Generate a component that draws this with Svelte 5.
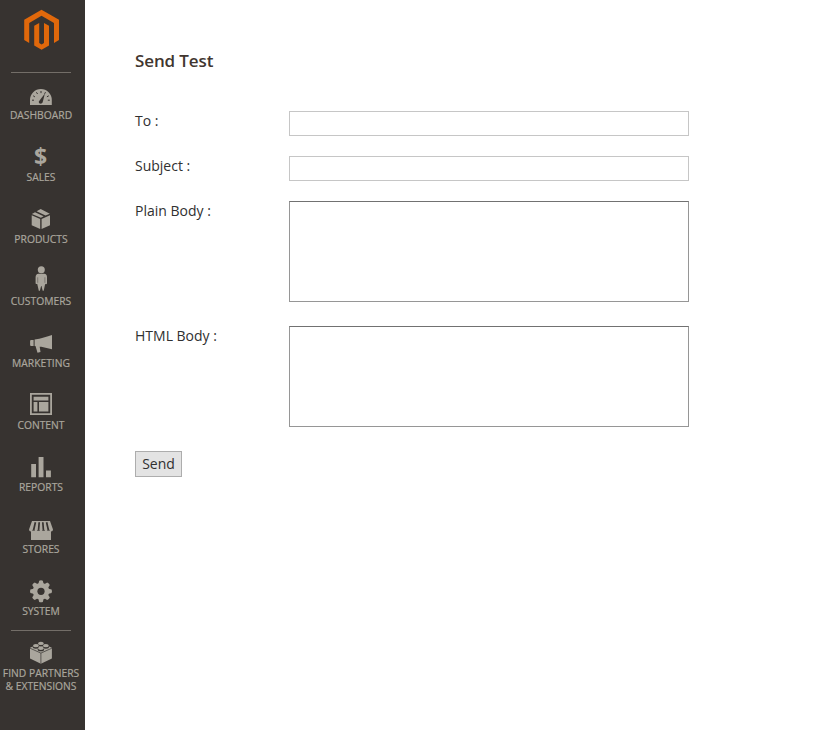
<script>
  const items = [
    { id: 'dashboard', label: 'Dashboard' },
    { id: 'sales', label: 'Sales' },
    { id: 'products', label: 'Products' },
    { id: 'customers', label: 'Customers' },
    { id: 'marketing', label: 'Marketing' },
    { id: 'content', label: 'Content' },
    { id: 'reports', label: 'Reports' },
    { id: 'stores', label: 'Stores' },
    { id: 'system', label: 'System' },
    { id: 'partners', label: 'Find Partners & Extensions' }
  ];
  const teeth = [0, 45, 90, 135, 180, 225, 270, 315];
  const studs = [[13.9, 4.4], [8.9, 6.7], [18.9, 6.7], [13.9, 9.3]];
</script>

<div class="page">
  <aside>
    <div class="logo">
      <svg width="37" height="42" viewBox="0 0 37 42">
        <path d="M18.5 .8 36 10.8V31L31 34V13.9L18.5 6.8 6.2 13.9V34L1.2 31V10.8Z" />
        <path d="M11.2 16.8 16.2 13.9V34L18.6 35.4 21 34V13.9L26 16.8V36.5L18.6 40.8 11.2 36.5Z" />
      </svg>
    </div>
    <nav>
      {#each items as item (item.id)}
        <a class="item" class:ruled={item.id === 'dashboard' || item.id === 'partners'} href="#{item.id}">
          <svg class="icon" width="28" height="28" viewBox="0 0 28 28">
            {#if item.id === 'dashboard'}
              <path d="M3 24V19a10.9 10.9 0 0 1 21.8 0V24Z" />
              <path class="cut" d="M11.8 20.4 17.9 12.6 15.6 21.6C14.5 23.6 11.4 22.6 11.8 20.4Z" />
              <path class="line" stroke-width="1" d="M5 19.2H7M6.2 14.8 7.9 15.9M9.4 11.3 10.6 13M14 10V12.1M18.5 11.2 17.6 12.8M21.8 14.8 19.9 15.8M22.8 19.2H20.8" />
            {:else if item.id === 'sales'}
              <text x="13.6" y="22" text-anchor="middle">$</text>
            {:else if item.id === 'products'}
              <path d="M4.7 10.2 13.2 13.9V24L4.7 20.2ZM14.6 13.9 23 10.2V20.2L14.6 24Z" />
              <path d="M4.9 8.9 8 7.2 16.6 11.3 13.9 12.7ZM9.6 6.3 13.7 4 22.8 8.8 18.5 10.6Z" />
            {:else if item.id === 'customers'}
              <circle cx="14.3" cy="2.7" r="3.5" />
              <path d="M11.5 6.8H17.2Q20 7.1 20 10V16.5Q19.2 18 18.2 16.8L16.7 23.7H15.7L14.5 19.1H14.1L12.9 23.7H11.8L10.2 16.8Q9 17.6 8.6 16.2V10Q8.7 7.1 11.5 6.8Z" />
              <path class="line" stroke-width=".4" d="M10.7 10.3V15.8M17.9 10.3V15.8" />
            {:else if item.id === 'marketing'}
              <path d="M3.6 11H6.6V16.9H3.6L3.1 16V12ZM7.6 10.5C14 10 20 7.4 25 6V20.2L14.2 17.8H12.7L13.5 23L10.5 23.8 8.5 17.1 7.6 17Z" />
            {:else if item.id === 'content'}
              <path fill-rule="evenodd" d="M3 2H25V24H3ZM4.8 3.8V22.2H23.2V3.8Z" />
              <path d="M6.6 5.8H21.4V9.4H6.6ZM6.6 10.9H10.4V20.4H6.6ZM12 10.9H21.4V20.4H12Z" />
            {:else if item.id === 'reports'}
              <path d="M4.2 11.1H9V24.3H4.2ZM11.6 4H16.5V24.3H11.6ZM19 17.5H23.9V24.3H19Z" />
            {:else if item.id === 'stores'}
              <path d="M5 6H23L26 14.4Q26 16.4 24 16.5V25H4V16.5Q2 16.4 2 14.4Z" />
              <path class="line" stroke-width="1.7" d="M8.4 7.2 6.7 14.8M12.2 7.2 11.6 14.8M15.8 7.2 16.4 14.8M19.6 7.2 21.3 14.8" />
              <path class="cut" d="M4.9 15.4 6.6 13.8 8 15.8ZM9.9 15.8 11.6 13.8 13 15.8ZM15 15.8 16.4 13.8 18.1 15.8ZM20 15.8 21.4 13.8 23.1 15.4Z" />
            {:else if item.id === 'system'}
              <circle cx="14" cy="14.3" r="8.3" />
              {#each teeth as angle}
                <path transform="rotate({angle} 14 14.3)" d="M11.2 7.6 12.2 3.7Q14 2.9 15.8 3.7L16.8 7.6Z" />
              {/each}
              <circle class="cut" cx="14" cy="14.3" r="3.6" />
            {:else}
              <path d="M3 8.8 13.9 4 24.9 8.8V19.6L13.9 24.7 3 19.6Z" />
              <path class="line" stroke-width=".7" d="M3 9.2 13.9 14.1 24.9 9.2M13.9 14.1V24.7" />
              {#each studs as [x, y]}
                <path class="cut" d="M{x - 3.2} {y}V{y + 1.1}A3.2 1.9 0 0 0 {x + 3.2} {y + 1.1}V{y}Z" />
                <ellipse cx={x} cy={y} rx="2.9" ry="1.6" />
              {/each}
            {/if}
          </svg>
          <span>{item.label}</span>
        </a>
      {/each}
    </nav>
  </aside>

  <main>
    <h1>Send Test</h1>
    <form>
      <div class="row"><label for="to">To :</label><input id="to" type="text" /></div>
      <div class="row"><label for="subject">Subject :</label><input id="subject" type="text" /></div>
      <div class="row area"><label for="plain">Plain Body :</label><textarea id="plain"></textarea></div>
      <div class="row area"><label for="html">HTML Body :</label><textarea id="html"></textarea></div>
      <button type="button">Send</button>
    </form>
  </main>
</div>

<style>
  :global(body) {
    margin: 0;
    background: #fff;
  }
  .page {
    display: flex;
    height: 730px;
    overflow: hidden;
    font-family: 'Open Sans', sans-serif;
    color: #303030;
  }
  aside {
    flex: none;
    width: 85px;
    background: #373330;
  }
  .logo {
    box-sizing: border-box;
    height: 72px;
    padding: 9px 0 0 23px;
  }
  .logo svg {
    display: block;
    fill: #e0680b;
  }
  nav {
    display: flex;
    flex-direction: column;
    width: 82px;
  }
  .item {
    display: flex;
    flex-direction: column;
    align-items: center;
    box-sizing: border-box;
    height: 62px;
    padding-top: 9px;
    color: #aaa69d;
    text-decoration: none;
    background: linear-gradient(#736e68, #736e68) no-repeat 11px 0 / 60px 0;
  }
  .item.ruled {
    background-size: 60px 1px;
  }
  .item:last-child {
    height: 80px;
  }
  .icon {
    flex: none;
    overflow: visible;
    fill: #aaa69d;
  }
  .icon text {
    font-size: 23px;
    font-weight: 700;
  }
  .cut {
    fill: #373330;
  }
  .line {
    fill: none;
    stroke: #373330;
  }
  .item span {
    font-size: 10.3px;
    line-height: 13px;
    text-align: center;
    text-transform: uppercase;
    -webkit-text-stroke: 0.2px #aaa69d;
  }
  main {
    flex: 1;
    padding: 48px 0 0 50px;
  }
  h1 {
    margin: 0;
    font-size: 17px;
    font-weight: 600;
    line-height: 26px;
    letter-spacing: -0.12px;
    color: #41362f;
  }
  form {
    padding-top: 37px;
  }
  .row {
    display: flex;
    align-items: flex-start;
    height: 45px;
  }
  .row.area {
    height: 125px;
  }
  label {
    width: 154px;
    font-size: 14px;
    line-height: 20px;
  }
  input,
  textarea {
    box-sizing: border-box;
    width: 400px;
    margin: 0;
    border: 1px solid #c6c6c6;
    border-radius: 0;
    background: #fff;
    font: 14px 'Open Sans', sans-serif;
  }
  input {
    height: 25px;
  }
  textarea {
    height: 101px;
    border-color: #717171 #969696 #969696;
    resize: none;
  }
  button {
    display: block;
    box-sizing: border-box;
    width: 47px;
    height: 26px;
    margin: 0;
    padding: 0;
    border: 1px solid #adadad;
    border-radius: 0;
    background: #e3e3e3;
    color: #303030;
    font: 14px/24px 'Open Sans', sans-serif;
  }
</style>
